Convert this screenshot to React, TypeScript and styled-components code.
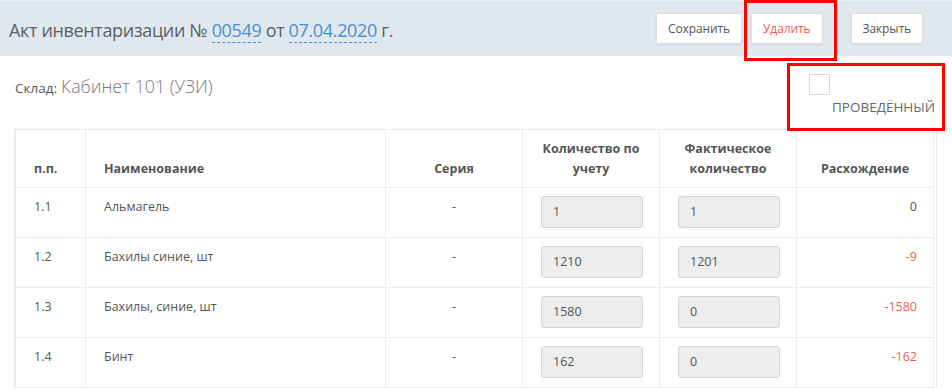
import styled, { createGlobalStyle, css } from "styled-components";

const GlobalStyle = createGlobalStyle`
  body {
    margin: 0;
    background: #fff;
    font-family: "Open Sans", "Noto Sans", sans-serif;
    color: #555;
  }
`;

const Page = styled.div`
  position: relative;
  width: 952px;
  height: 391px;
  overflow: hidden;
`;

const TopBar = styled.header`
  height: 56px;
  box-sizing: border-box;
  background: #e0e8ee;
  border-top: 1px solid #eaeff3;
  display: flex;
  align-items: center;
  justify-content: space-between;
  padding: 2px 29px 0 9px;
`;

const Title = styled.h1`
  margin: 0;
  font-size: 18px;
  letter-spacing: -0.35px;
  font-weight: 400;
  color: #5c5f63;
`;

const DocLink = styled.a`
  color: #4a8fd6;
  text-decoration: none;
  border-bottom: 1px dashed #4a8fd6;
`;

const Actions = styled.div`
  display: flex;
  align-items: center;
  margin-top: -2px;
`;

const Button = styled.button<{ $danger?: boolean; $gap?: number }>`
  height: 31px;
  margin-left: ${(p) => p.$gap ?? 0}px;
  padding: 0 11px;
  background: #fff;
  border: 1px solid #d9dfe3;
  border-radius: 2px;
  box-shadow: 0 1px 2px rgba(0, 0, 0, 0.08);
  font-family: inherit;
  font-size: 12px;
  letter-spacing: -0.1px;
  color: ${(p) => (p.$danger ? "#ee5a5a" : "#555")};
  cursor: pointer;
`;

const InfoRow = styled.div`
  display: flex;
  justify-content: space-between;
  align-items: flex-start;
  padding: 18px 15px 0 15px;
`;

const Store = styled.div`
  display: flex;
  align-items: baseline;
  gap: 4px;
`;

const StoreLabel = styled.span`
  font-size: 13.5px;
  color: #555;
`;

const StoreName = styled.span`
  font-size: 17.8px;
  font-weight: 300;
  color: #7e7584;
`;

const Posted = styled.label`
  display: flex;
  flex-direction: column;
  align-items: flex-start;
  width: 128px;
`;

const Check = styled.span`
  width: 19px;
  height: 19px;
  border: 1px solid #d3dadd;
  background: #fff;
`;

const PostedText = styled.span`
  margin: 3px 0 0 23px;
  font-size: 13.5px;
  line-height: 18px;
  color: #666;
  white-space: nowrap;
`;

const TableWrap = styled.div`
  margin: 13px 15px 0 14px;
  border: 1px solid #e6eaec;
  border-bottom: none;
  padding-right: 2px;
`;

const Table = styled.table`
  width: 919px;
  border-collapse: collapse;
  table-layout: fixed;
  border: 1px solid #e6eaec;
  border-top: none;
`;

const cell = css<{ $align?: "left" | "center" | "right" }>`
  border: 1px solid #e9eef0;
  text-align: ${(p) => p.$align ?? "left"};
  box-sizing: border-box;
`;

const Th = styled.th<{ $align?: "left" | "center" | "right" }>`
  ${cell};
  height: 57px;
  vertical-align: bottom;
  padding: 0 18px 8px;
  font-size: 12.5px;
  font-weight: 700;
  line-height: 20px;
  color: #555;
  border-top: none;
`;

const Td = styled.td<{ $align?: "left" | "center" | "right"; $tone?: "red" }>`
  ${cell};
  height: 50px;
  vertical-align: top;
  padding: 10px 18px 0;
  font-size: 12.5px;
  line-height: 18px;
  color: ${(p) => (p.$tone === "red" ? "#f0605a" : "#555")};
  ${(p) => p.$align === "right" && "padding-right: 16px;"}
`;

const InputCell = styled.td`
  ${cell};
  height: 50px;
  vertical-align: top;
  padding: 8px 18px 0;
`;

const Qty = styled.input`
  display: block;
  width: 102px;
  height: 32px;
  box-sizing: border-box;
  padding: 0 11px;
  background: #ededed;
  border: 1px solid #cfd9dc;
  border-radius: 3px;
  font-family: inherit;
  font-size: 12.5px;
  color: #555;
`;

const Highlight = styled.div<{ $x: number; $y: number; $w: number; $h: number }>`
  position: absolute;
  left: ${(p) => p.$x}px;
  top: ${(p) => p.$y}px;
  width: ${(p) => p.$w}px;
  height: ${(p) => p.$h}px;
  box-sizing: border-box;
  border: 3px solid #f00;
  pointer-events: none;
`;

const rows = [
  { n: "1.1", name: "Альмагель", plan: "1", fact: "1", diff: "0" },
  { n: "1.2", name: "Бахилы синие, шт", plan: "1210", fact: "1201", diff: "-9" },
  { n: "1.3", name: "Бахилы, синие, шт", plan: "1580", fact: "0", diff: "-1580" },
  { n: "1.4", name: "Бинт", plan: "162", fact: "0", diff: "-162" },
];

export default function App() {
  return (
    <Page>
      <GlobalStyle />
      <TopBar>
        <Title>
          Акт инвентаризации № <DocLink>00549</DocLink> от{" "}
          <DocLink>07.04.2020</DocLink> г.
        </Title>
        <Actions>
          <Button>Сохранить</Button>
          <Button $danger $gap={9}>
            Удалить
          </Button>
          <Button $gap={28}>Закрыть</Button>
        </Actions>
      </TopBar>

      <InfoRow>
        <Store>
          <StoreLabel>Склад:</StoreLabel>
          <StoreName>Кабинет 101 (УЗИ)</StoreName>
        </Store>
        <Posted>
          <Check />
          <PostedText>ПРОВЕДЁННЫЙ</PostedText>
        </Posted>
      </InfoRow>

      <TableWrap>
        <Table>
          <colgroup>
            <col style={{ width: 70 }} />
            <col style={{ width: 300 }} />
            <col style={{ width: 137 }} />
            <col style={{ width: 137 }} />
            <col style={{ width: 137 }} />
            <col style={{ width: 137 }} />
          </colgroup>
          <thead>
            <tr>
              <Th>п.п.</Th>
              <Th>Наименование</Th>
              <Th $align="center">Серия</Th>
              <Th $align="center">Количество по учету</Th>
              <Th $align="center">Фактическое количество</Th>
              <Th $align="center">Расхождение</Th>
            </tr>
          </thead>
          <tbody>
            {rows.map((r) => (
              <tr key={r.n}>
                <Td>{r.n}</Td>
                <Td>{r.name}</Td>
                <Td $align="center">-</Td>
                <InputCell>
                  <Qty readOnly value={r.plan} />
                </InputCell>
                <InputCell>
                  <Qty readOnly value={r.fact} />
                </InputCell>
                <Td $align="right" $tone={r.diff.startsWith("-") ? "red" : undefined}>
                  {r.diff}
                </Td>
              </tr>
            ))}
          </tbody>
        </Table>
      </TableWrap>

      <Highlight $x={744} $y={0} $w={93} $h={61} />
      <Highlight $x={787} $y={63} $w={158} $h={68} />
    </Page>
  );
}
